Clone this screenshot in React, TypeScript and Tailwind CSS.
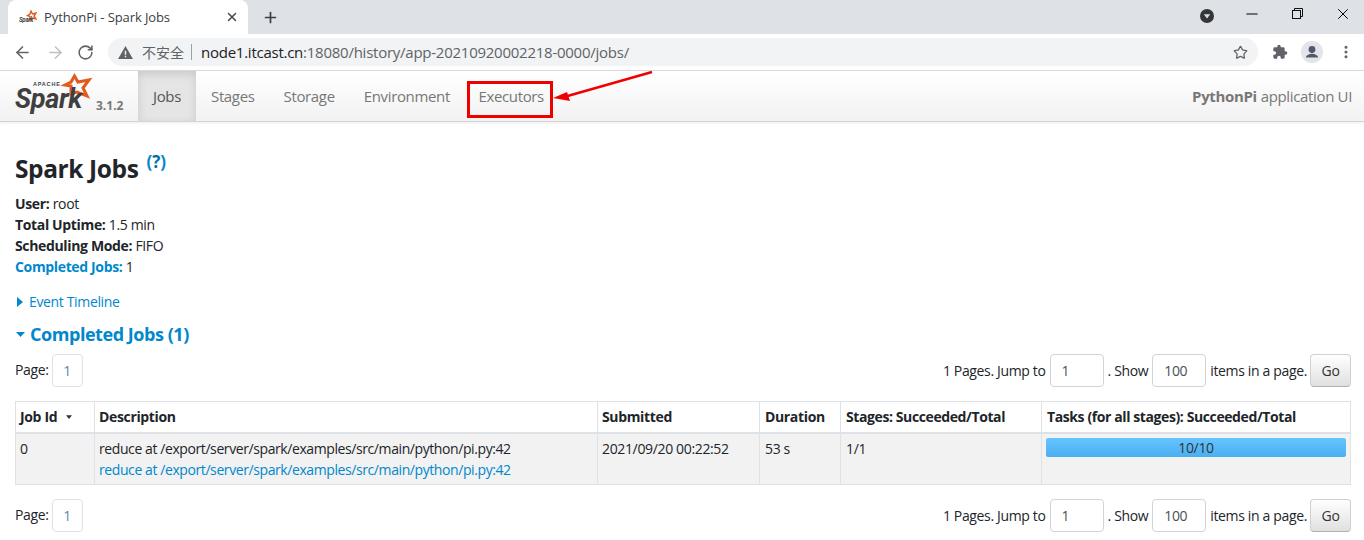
import React from "react";
import { ArrowLeft, ArrowRight, RotateCw, Star, X, Plus, Minus, MoreVertical } from "lucide-react";

const SparkLogo = () => (
  <svg viewBox="0 0 80 44" className="w-[80px] h-[44px] shrink-0">
    <path d="M60.500 5 L64 11 L75 9 L69 17 L73 25 L63 21 L57 23 L57 15 L51 14 L57 11 Z" fill="none" stroke="#e25a1c" strokeWidth="3" strokeLinejoin="miter" />
    <text x="19" y="15" fontSize="5.500" fontWeight="700" letterSpacing="0.8" fill="#444" fontFamily="'Liberation Sans', sans-serif">APACHE</text>
    <text x="1" y="37" fontSize="28" fontStyle="italic" fontWeight="700" textLength="67" lengthAdjust="spacingAndGlyphs" fill="#3f3f3f" fontFamily="Roboto, sans-serif">Spark</text>
  </svg>
);

const Favicon = () => (
  <svg viewBox="0 0 18 15" className="w-[18px] h-[15px] shrink-0">
    <path d="M12 1 L13.500 4 L17 3 L15 6 L17 9 L13.500 8 L11 10 L11 6.500 L8.500 5.500 L11 4 Z" fill="none" stroke="#e25a1c" strokeWidth="1.400" />
    <text x="0" y="12" fontSize="7.500" fontStyle="italic" fontWeight="700" textLength="14" lengthAdjust="spacingAndGlyphs" fill="#444" fontFamily="Roboto, sans-serif">Spark</text>
  </svg>
);

const Pager = () => (
  <div className="flex items-center justify-between h-[33px] w-[1336px]">
    <div className="flex items-center">
      <span className="mr-[3px] -mt-[3px]">Page:</span>
      <span className="w-[31px] h-[33px] flex items-center justify-center border border-[#dee2e6] rounded text-[#5f87a6]">1</span>
    </div>
    <div className="flex items-center">
      <span>1 Pages. Jump to</span>
      <span className="ml-[4px] w-[54px] h-[33px] pl-[11px] flex items-center border border-[#ced4da] rounded text-[#495057]">1</span>
      <span className="ml-[4px]">. Show</span>
      <span className="ml-[4px] w-[54px] h-[33px] pl-[11px] flex items-center border border-[#ced4da] rounded text-[#495057]">100</span>
      <span className="ml-[4px]">items in a page.</span>
      <span className="ml-[3px] w-[41px] h-[33px] flex items-center justify-center rounded border border-[#d0d0d0] border-b-[#b0b0b0] bg-gradient-to-b from-white to-[#e0e0e0] text-[#333]">Go</span>
    </div>
  </div>
);

const th = "border border-[#dee2e6] border-b-2 text-left font-bold";
const td = "border border-[#dee2e6] pt-[4px] leading-[21px]";

export default function App() {
  const nav = ["Stages", "Storage", "Environment"];
  return (
    <div className="w-[1364px] h-[540px] overflow-hidden bg-white text-[14px] text-[#212529] font-['Open_Sans','Noto_Sans_CJK_SC',sans-serif] tracking-[-0.35px]">
      {/* tab strip */}
      <div className="h-[34px] bg-[#dee1e6] flex items-end pl-[8px] pr-[8px]">
        <div className="w-[240px] h-[34px] bg-white rounded-t-lg flex items-center pl-[11px] pr-[9px]">
          <Favicon />
          <span className="ml-[7px] mt-px text-[13px] text-[#3c4043] tracking-[-0.1px] flex-1 whitespace-nowrap">PythonPi - Spark Jobs</span>
          <X size={14} strokeWidth={2.5} className="text-[#45494c]" />
        </div>
        <Plus size={17} strokeWidth={2.4} className="ml-[14px] mb-[8px] text-[#3c4043]" />
        <div className="flex-1" />
        <div className="mb-[3px] flex items-center h-[30px]">
          <svg viewBox="0 0 14 14" className="w-[14px] h-[14px] mr-[29px]">
            <circle cx="7" cy="7" r="7" fill="#35363a" />
            <path d="M3.800 5.300h6.400L7 9.500z" fill="#dee1e6" />
          </svg>
          <Minus size={18} strokeWidth={1.4} className="mr-[31px] -mt-[5px] text-black" />
          <svg viewBox="0 0 11 11" className="w-[11px] h-[11px] mr-[31px] -mt-[5px]" fill="none" stroke="#111" strokeWidth="1">
            <rect x="0.500" y="2.500" width="8" height="8" />
            <path d="M2.500 2.500V.500h8v8h-2" />
          </svg>
          <X size={18} strokeWidth={1.3} className="mr-[4px] -mt-[5px] text-black" />
        </div>
      </div>
      {/* toolbar */}
      <div className="h-[37px] bg-white border-b border-[#dadce0] flex items-center pl-[13px]">
        <ArrowLeft size={19} strokeWidth={2} className="text-[#5f6368]" />
        <ArrowRight size={19} strokeWidth={2} className="ml-[14px] text-[#bcc0c4]" />
        <RotateCw size={17} strokeWidth={2.2} className="ml-[12px] text-[#5f6368]" />
        <div className="ml-[14px] w-[1150px] h-[28px] rounded-full bg-[#f1f3f4] flex items-center pl-[10px]">
          <svg viewBox="0 0 16 14" className="w-[15px] h-[13px]"><path d="M8 0l8 14H0z" fill="#5f6368" /><path d="M7.200 5h1.600v4.500H7.200zM7.200 10.500h1.600V12H7.200z" fill="#f1f3f4" /></svg>
          <span className="ml-[9px] text-[14px] text-[#5f6368] tracking-normal">不安全</span>
          <span className="ml-[7px] h-[16px] w-px bg-[#9aa0a6]" />
          <span className="ml-[9px] text-[15px] tracking-[-0.25px] text-[#5f6368] whitespace-nowrap"><span className="text-[#202124]">node1.itcast.cn</span>:18080/history/app-20210920002218-0000/jobs/</span>
          <div className="flex-1" />
          <Star size={15} strokeWidth={2} className="mr-[10px] text-[#5f6368]" />
        </div>
        <svg viewBox="0 0 24 24" className="ml-[14px] w-[16px] h-[16px]" fill="#5f6368"><path d="M20.500 11H19V7a2 2 0 0 0-2-2h-4V3.500a2.500 2.500 0 0 0-5 0V5H4a2 2 0 0 0-2 2v3.800h1.500a2.700 2.700 0 0 1 0 5.400H2V20a2 2 0 0 0 2 2h3.800v-1.500a2.700 2.700 0 0 1 5.400 0V22H17a2 2 0 0 0 2-2v-4h1.500a2.500 2.500 0 0 0 0-5z" /></svg>
        <svg viewBox="0 0 22 22" className="ml-[13px] w-[22px] h-[22px]"><circle cx="11" cy="11" r="11" fill="#e3e5e9" /><circle cx="11" cy="8.500" r="3.400" fill="#50586a" /><path d="M5 16.500c0-2.500 4-3.700 6-3.700s6 1.200 6 3.700z" fill="#50586a" /></svg>
        <MoreVertical size={16} strokeWidth={2.6} className="ml-[15px] text-[#5f6368]" />
      </div>
      {/* spark navbar */}
      <div className="relative h-[51px] border-b border-[#d4d4d4] bg-gradient-to-b from-white to-[#f2f2f2] flex pl-[14px] shadow-[0_1px_3px_rgba(0,0,0,0.08)] text-[15px] tracking-[-0.35px]">
        <div className="w-[124px] flex">
          <SparkLogo />
          <span className="text-[12px] font-bold text-[#777] mt-[26px] ml-[2px] tracking-normal">3.1.2</span>
        </div>
        <div className="w-[58px] mr-[0.500px] flex items-center justify-center bg-[#e5e5e5] text-[#555] shadow-[inset_0_3px_8px_rgba(0,0,0,0.125)]">Jobs</div>
        {nav.map((n) => (
          <div key={n} className="px-[14.500px] flex items-center text-[#777]">{n}</div>
        ))}
        <div className="ml-[3px] pl-[8px] pr-[6px] pb-[6px] flex items-center text-[#777] h-[37px] mt-[10px] border-[3px] border-[#ee0000] box-border">Executors</div>
        <div className="flex-1" />
        <div className="flex items-center pr-[12px] text-[#777]"><span className="font-bold mr-[4px]">PythonPi</span> application UI</div>
        <svg viewBox="0 0 110 36" className="absolute left-[552px] top-[-1px] w-[110px] h-[36px] overflow-visible">
          <path d="M100 2 L12 27" stroke="#f00000" strokeWidth="2.500" />
          <path d="M1 28 L15 22 L18 31 Z" fill="#f00000" />
        </svg>
      </div>
      {/* content */}
      <div className="px-[15px] pt-[29px]">
        <div className="flex items-start h-[36px]">
          <span className="text-[24.500px] leading-[36px] font-bold tracking-[-0.4px]">Spark Jobs</span>
          <sup className="ml-[8px] mt-[10px] text-[17px] leading-[18px] font-bold text-[#0088cc] tracking-normal">(<span className="text-[#0070a8]">?</span>)</sup>
        </div>
        <div className="mt-[6px] leading-[21px]">
          <div><b>User:</b> root</div>
          <div><b>Total Uptime:</b> 1.5 min</div>
          <div><b>Scheduling Mode:</b> FIFO</div>
          <div><b className="text-[#0088cc]">Completed Jobs:</b> 1</div>
        </div>
        <div className="mt-[14px] flex items-center h-[21px] text-[#0088cc]">
          <svg viewBox="0 0 6 10" className="w-[6px] h-[10px] ml-[2px] mr-[6px]"><path d="M0 0l6 5-6 5z" fill="#0088cc" /></svg>
          Event Timeline
        </div>
        <div className="mt-[10px] flex items-center h-[24px] text-[#0088cc] font-bold text-[18px] tracking-[-0.45px]">
          <svg viewBox="0 0 9 5" className="w-[9px] h-[5px] ml-px mr-[5px]"><path d="M0 0h9L4.500 5z" fill="#0088cc" /></svg>
          Completed Jobs (1)
        </div>
        <div className="mt-[8px]"><Pager /></div>
        <table className="mt-[14px] w-[1336px] table-fixed border-collapse border border-[#dee2e6]">
          <colgroup>
            <col className="w-[79px]" /><col className="w-[503px]" /><col className="w-[162px]" /><col className="w-[81px]" /><col className="w-[201px]" /><col />
          </colgroup>
          <thead>
            <tr className="h-[31px]">
              <th className={`${th} px-[4px]`}><span className="flex items-center">Job Id<svg viewBox="0 0 8 5" className="ml-[9px] w-[6px] h-[4px]"><path d="M0 0h8L4 5z" fill="#333" /></svg></span></th>
              <th className={`${th} px-[4px]`}>Description</th>
              <th className={`${th} px-[4px]`}>Submitted</th>
              <th className={`${th} pl-[5px] pr-[4px]`}>Duration</th>
              <th className={`${th} pl-[5px] pr-[4px] tracking-[-0.4px]`}>Stages: Succeeded/Total</th>
              <th className={`${th} pl-[5px] pr-[4px] tracking-[-0.4px]`}>Tasks (for all stages): Succeeded/Total</th>
            </tr>
          </thead>
          <tbody>
            <tr className="h-[52px] bg-[#f2f2f2] align-top">
              <td className={`${td} px-[4px]`}>0</td>
              <td className={`${td} px-[4px] tracking-[-0.41px]`}>
                <div>reduce at /export/server/spark/examples/src/main/python/pi.py:42</div>
                <div className="text-[#0088cc]">reduce at /export/server/spark/examples/src/main/python/pi.py:42</div>
              </td>
              <td className={`${td} px-[4px]`}>2021/09/20 00:22:52</td>
              <td className={`${td} pl-[5px] pr-[4px]`}>53 s</td>
              <td className={`${td} pl-[5px] pr-[4px]`}>1/1</td>
              <td className="border border-[#dee2e6] px-[4px] pt-[4px] align-top">
                <div className="h-[19px] rounded-[2px] bg-gradient-to-b from-[#64c5ff] to-[#4aaef0] flex items-center justify-center text-[#333] leading-[19px]">10/10</div>
              </td>
            </tr>
          </tbody>
        </table>
        <div className="mt-[14px]"><Pager /></div>
      </div>
    </div>
  );
}
